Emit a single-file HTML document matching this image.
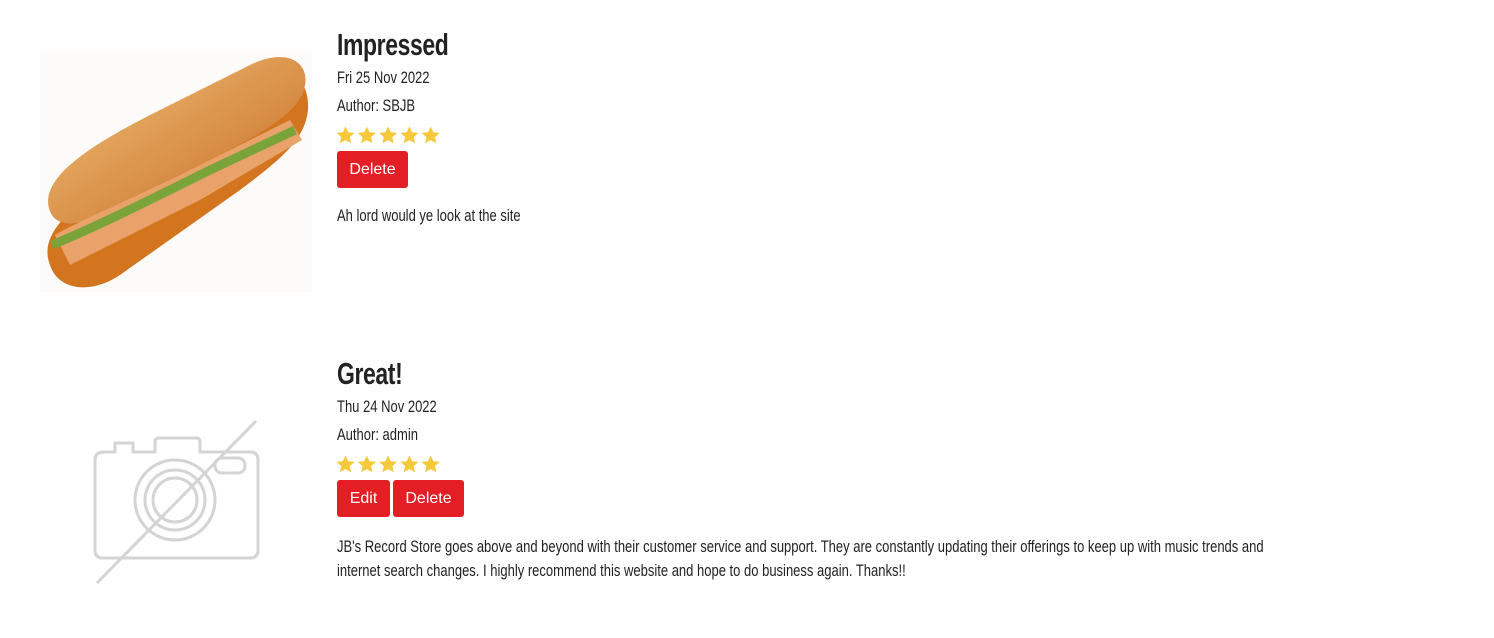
<!DOCTYPE html>
<html><head><meta charset="utf-8"><style>
body{margin:0;background:#fff;width:1494px;height:638px;position:relative;overflow:hidden;font-family:"Liberation Sans",sans-serif;color:#222;}
.a{position:absolute;white-space:nowrap;transform-origin:0 0;transform:scaleX(0.765)}
h2{position:absolute;margin:0;font-size:31px;font-weight:bold;letter-spacing:-0.5px;color:#222;transform-origin:0 0;transform:scaleX(0.74)}
.t{font-size:17px}
.btn{position:absolute;background:#e31e24;color:#fff;border-radius:3px;font-family:"Liberation Sans",sans-serif;font-size:16px;height:37px;line-height:37px;text-align:center}
.s{position:absolute}
</style></head><body>
<svg style="position:absolute;left:40px;top:50px" width="272" height="242" viewBox="0 0 272 242">
<defs><linearGradient id="g" x1="0" y1="0" x2="1" y2="1"><stop offset="0" stop-color="#f3c27a"/><stop offset="1" stop-color="#c56a22"/></linearGradient></defs>
<rect width="272" height="242" fill="#fdfbfa"/>
<path d="M10 215 C0 190 20 165 60 140 L200 40 C240 15 270 20 268 60 C265 90 240 110 200 140 L80 225 C50 245 18 240 10 215Z" fill="#d3751f"/>
<path d="M8 150 C10 120 60 90 120 60 L210 15 C250 -5 275 15 262 45 C250 70 200 95 150 120 L60 165 C30 180 8 175 8 150Z" fill="url(#g)"/>
<path d="M15 185 C40 170 90 150 150 120 L250 70 L262 90 L160 150 L30 215 Z" fill="#e8a26a"/>
<path d="M12 195 C60 175 120 145 170 120 L255 80" stroke="#7aa33a" stroke-width="9" fill="none"/>
</svg>
<svg style="position:absolute;left:90px;top:415px" width="175" height="175" viewBox="90 415 175 175" fill="none" stroke="#d4d4d4" stroke-width="3">
<path d="M104 452 H115 V443 H133 V452 H155 V442 Q155 438 159 438 H196 Q200 438 200 442 V452 H250 Q258 452 258 460 V550 Q258 558 250 558 H103 Q95 558 95 550 V460 Q95 452 104 452Z"/>
<rect x="215" y="458" width="30" height="15" rx="7"/>
<circle cx="175" cy="500" r="40"/><circle cx="175" cy="500" r="30"/><circle cx="175" cy="500" r="22"/>
<line x1="256" y1="421" x2="97" y2="583"/>
</svg>
<svg width="0" height="0" style="position:absolute"><defs><path id="st" d="M9.5 0.5 L12.2 6.2 L18.5 6.9 L13.8 11.1 L15.1 17.3 L9.5 14.1 L3.9 17.3 L5.2 11.1 L0.5 6.9 L6.8 6.2 Z" fill="#f5c93b"/></defs></svg>
<h2 style="left:337px;top:27px">Impressed</h2>
<div class="a t" style="left:337px;top:68px">Fri 25 Nov 2022</div>
<div class="a t" style="left:337px;top:96px">Author: SBJB</div>
<svg class="s" style="left:336px;top:126px" width="108" height="19"><use href="#st"/><use href="#st" x="21.3"/><use href="#st" x="42.6"/><use href="#st" x="63.9"/><use href="#st" x="85.2"/></svg>
<div class="btn" style="left:337px;top:151px;width:71px">Delete</div>
<div class="a t" style="left:337px;top:206px">Ah lord would ye look at the site</div>
<h2 style="left:337px;top:356px">Great!</h2>
<div class="a t" style="left:337px;top:397px">Thu 24 Nov 2022</div>
<div class="a t" style="left:337px;top:425px">Author: admin</div>
<svg class="s" style="left:336px;top:455px" width="108" height="19"><use href="#st"/><use href="#st" x="21.3"/><use href="#st" x="42.6"/><use href="#st" x="63.9"/><use href="#st" x="85.2"/></svg>
<div class="btn" style="left:337px;top:480px;width:53px">Edit</div>
<div class="btn" style="left:393px;top:480px;width:71px">Delete</div>
<div class="a t" style="left:337px;top:535px;line-height:24px">JB's Record Store goes above and beyond with their customer service and support. They are constantly updating their offerings to keep up with music trends and<br>internet search changes. I highly recommend this website and hope to do business again. Thanks!!</div>
</body></html>
